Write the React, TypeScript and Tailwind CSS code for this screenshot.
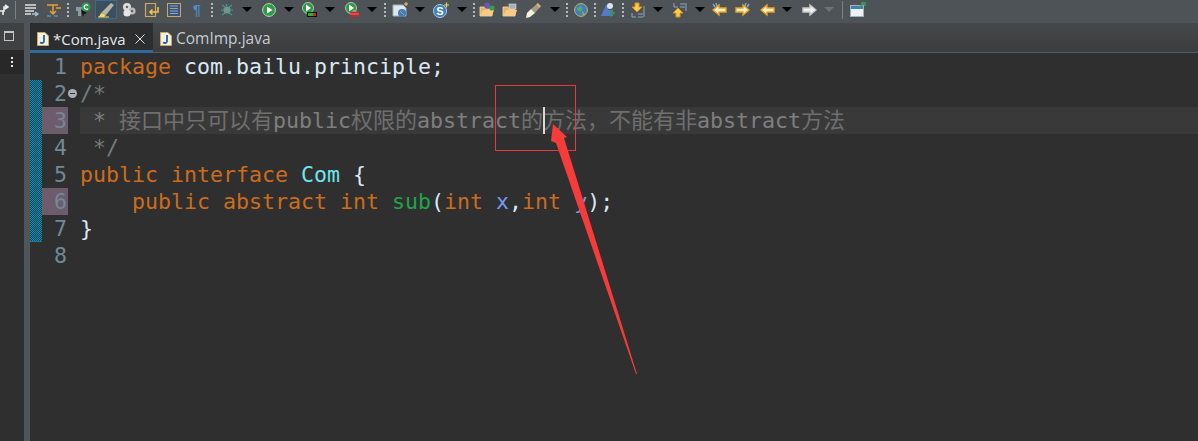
import React from "react";

const Caret = ({ c = "ml-[9px]", gray = false }: { c?: string; gray?: boolean }) => (
  <svg className={`${c} shrink-0`} width="10" height="5" viewBox="0 0 10 5">
    <path d="M0 0H10L5 5Z" fill={gray ? "#6d7275" : "#000"} />
  </svg>
);
const Dots = ({ c }: { c: string }) => (
  <div className={`${c} shrink-0 w-[2px] h-[14px] flex flex-col justify-between`}>
    {[0, 1, 2, 3].map((i) => (
      <div key={i} className="w-[2px] h-[2px] bg-[#b5b8b8]" />
    ))}
  </div>
);
const Ic = ({ c, w = 16, children }: { c: string; w?: number; children: React.ReactNode }) => (
  <svg className={`${c} shrink-0`} width={w} height="16" viewBox={`0 0 ${w} 16`}>
    {children}
  </svg>
);
const Run = ({ extra }: { extra?: React.ReactNode }) => (
  <>
    <circle cx="6" cy="6" r="5.5" fill="#2e9a46" stroke="#bfe0c0" strokeWidth="0.8" />
    <path d="M4 2.5L9 6L4 9.5Z" fill="#fff" />
    {extra}
  </>
);
const ArrowL = ({ flip = false, white = false, ears = false }: { flip?: boolean; white?: boolean; ears?: boolean }) => (
  <g transform={flip ? "translate(15 0) scale(-1 1)" : undefined}>
    {ears && <path d="M1 2l2 3M4 1l1 3" stroke="#7fa6c9" strokeWidth="1.5" />}
    <path
      d="M1 8L7 3V6H14V10H7V13Z"
      fill={white ? "#f0f0f0" : "#fff3cf"}
      stroke={white ? "#c9c9c9" : "#f0a020"}
      strokeWidth="1.4"
    />
  </g>
);

const Toolbar = () => (
  <div className="h-[23px] pb-[4px] bg-[#4d5356] flex items-center overflow-hidden">
    <Ic c="ml-0" w={9}>
      <path d="M0 9H4V5H7M5 3L8 5L5 7M3 9V13" stroke="#eee" strokeWidth="1.6" fill="none" />
    </Ic>
    <div className="ml-[6px] w-px h-[18px] bg-[#7c8184] shrink-0" />
    <Ic c="ml-[8px]">
      <path d="M1 3H12M1 6H12M1 9H10M1 12H7" stroke="#dfe0e0" strokeWidth="1.4" />
      <path d="M8 12H13M11 10L14 12L11 14" stroke="#a8c0d8" strokeWidth="1.4" fill="none" />
    </Ic>
    <Ic c="ml-[6px]">
      <path d="M1 3H12M7 3V11M4 9L7 12L10 9M10 6H15" stroke="#e8a030" strokeWidth="1.5" fill="none" />
      <path d="M1 14H5M8 14H12" stroke="#5b8cc0" strokeWidth="1.3" />
    </Ic>
    <Dots c="ml-[5px]" />
    <Ic c="ml-[6px]">
      <path d="M1 5H9V9H6V14H3V9H1Z" fill="#8a9aa8" />
      <path d="M6 7L12 11L9 12L8 15Z" fill="#111" />
      <circle cx="11" cy="5" r="4.5" fill="#2f9a55" />
      <path d="M13 3.5A2.2 2.2 0 1 0 13 6.5" stroke="#fff" strokeWidth="1.1" fill="none" />
    </Ic>
    <div className="ml-[4px] w-[22px] h-[19px] bg-[#3c4f5f] border border-[#3a6a92] flex items-center justify-center shrink-0">
      <svg width="18" height="16" viewBox="0 0 18 16">
        <path d="M4 11L14 1L17 3L9 13Z" fill="#b9b4a5" />
        <path d="M4 11L9 13L7 15H2Z" fill="#f4dc63" />
        <path d="M1 15H12" stroke="#f4dc63" strokeWidth="1" />
      </svg>
    </div>
    <Ic c="ml-[5px]" w={14}>
      <circle cx="5" cy="5" r="4" fill="#ddd" />
      <circle cx="10" cy="9" r="3.6" fill="#bbb" />
      <circle cx="5" cy="11" r="3.6" fill="#e5e5e5" />
      <circle cx="5" cy="5" r="1.3" fill="#666" />
      <circle cx="10" cy="9" r="1.2" fill="#666" />
    </Ic>
    <Ic c="ml-[8px]">
      <path d="M1.5 1.5H11.5V14.5H1.5Z" fill="#55585a" stroke="#d0a860" strokeWidth="1.2" />
      <path d="M14 5V10H6M8.5 7.5L6 10L8.5 12.5" stroke="#f2c34e" strokeWidth="1.6" fill="none" />
    </Ic>
    <Ic c="ml-[7px]" w={15}>
      <rect x="0.5" y="1.5" width="13" height="13" fill="#3f5672" stroke="#c8a868" />
      <path d="M3 4H11M3 6.5H11M3 9H11M3 11.5H11" stroke="#8aa6c8" />
    </Ic>
    <span className="ml-[11px] w-[10px] shrink-0 text-[14px] leading-[16px] font-bold text-[#4f8cc9] font-['Liberation_Sans',sans-serif]">¶</span>
    <Dots c="ml-[8px]" />
    <Ic c="ml-[7px]" w={14}>
      <circle cx="7" cy="8" r="3.6" fill="#6f9a8a" />
      <path d="M2 3L5 5M12 3L9 5M1 8H3M11 8H13M2 13L5 11M12 13L9 11M6 2L7 4" stroke="#3aa0a0" strokeWidth="1.2" />
    </Ic>
    <Caret c="ml-[8px]" />
    <Ic c="ml-[10px]" w={14}>
      <circle cx="7" cy="8" r="6.4" fill="#2e9a46" stroke="#b8d8b8" />
      <path d="M5 4.5L10.5 8L5 11.5Z" fill="#fff" />
    </Ic>
    <Caret c="ml-[8px]" />
    <Ic c="ml-[8px]">
      <Run extra={<><rect x="5" y="10" width="10" height="5" fill="#111" /><rect x="6" y="11" width="5" height="3" fill="#1bb83a" /><rect x="11" y="11" width="3" height="3" fill="#d22" /></>} />
    </Ic>
    <Caret c="ml-[7px]" />
    <Ic c="ml-[10px]">
      <Run extra={<><rect x="5" y="10" width="9" height="5" fill="#c62828" /><path d="M8 10V8.5H11V10M5 12H14" stroke="#e88" strokeWidth="0.8" fill="none" /></>} />
    </Ic>
    <Caret c="ml-[6px]" />
    <Dots c="ml-[7px]" />
    <Ic c="ml-[6px]">
      <path d="M1 3H11L14 6V14H1Z" fill="#dfe6ee" stroke="#9fb0c0" />
      <circle cx="10" cy="11" r="4" fill="#3d7fc0" />
      <path d="M8 9L12 13" stroke="#c8a030" />
      <path d="M12 2H16M14 0V4" stroke="#f4d060" strokeWidth="1" />
    </Ic>
    <Caret c="ml-[7px]" />
    <Ic c="ml-[8px]">
      <circle cx="7" cy="9" r="6.5" fill="#3b7fc0" stroke="#a8c8e8" />
      <text x="7" y="13" textAnchor="middle" fontSize="11" fontWeight="bold" fill="#fff" fontFamily="Liberation Sans">S</text>
      <path d="M11 3H16M13.5 0.5V5.5" stroke="#f4d060" strokeWidth="1.2" />
    </Ic>
    <Caret c="ml-[8px]" />
    <Dots c="ml-[6px]" />
    <Ic c="ml-[4px]">
      <path d="M1 5H6L7 7H13V14H1Z" fill="#e8b060" stroke="#fae0b0" strokeWidth="0.8" />
      <path d="M1 14L4 8H15L13 14Z" fill="#f4cc88" />
      <circle cx="8" cy="3.5" r="3" fill="#6a58b8" />
      <circle cx="13" cy="6" r="2.6" fill="#3f9a58" />
    </Ic>
    <Ic c="ml-[7px]">
      <path d="M1 5H6L7 7H13V14H1Z" fill="#e8b060" stroke="#fae0b0" strokeWidth="0.8" />
      <path d="M1 14L4 8H15L13 14Z" fill="#f4cc88" />
      <rect x="7" y="2" width="7" height="5" fill="#a8b0b8" stroke="#ddd" strokeWidth="0.6" />
    </Ic>
    <Ic c="ml-[7px]" w={17}>
      <path d="M6 7L13 1L16 4L10 11Z" fill="#a39a88" />
      <path d="M12 2L15 5" stroke="#e8b060" strokeWidth="2" />
      <path d="M1 16L2 11L6 7L10 11L5 15Z" fill="#fbf3d8" />
    </Ic>
    <Caret c="ml-[8px]" />
    <Dots c="ml-[6px]" />
    <Ic c="ml-[6px]" w={14}>
      <circle cx="7" cy="8" r="6.4" fill="#3d7fc0" stroke="#c8b070" />
      <path d="M3 6L7 4L9 7L6 10L4 9Z" fill="#58a868" />
      <path d="M8 9L11 12L9 14Z" fill="#c8a030" />
    </Ic>
    <Dots c="ml-[6px]" />
    <Ic c="ml-[5px]" w={15}>
      <path d="M0 14L5 3H9L7 8H12V14Z" fill="#5878c8" />
      <circle cx="9" cy="4" r="3" fill="#d8e4f0" />
      <path d="M10 9V15M10 9L14 11L10 13Z" fill="#2f9a55" stroke="#2f9a55" />
    </Ic>
    <Dots c="ml-[6px]" />
    <Ic c="ml-[6px]" w={15}>
      <path d="M2 5H5V1H9V5H12L7 10Z" fill="#f7cb4d" stroke="#e09018" />
      <path d="M2 11V15H6M8 12H13M8 15H13M14 4V15" stroke="#8fa8c0" strokeWidth="1" fill="none" />
    </Ic>
    <Caret c="ml-[8px]" />
    <Ic c="ml-[9px]" w={15}>
      <path d="M4 11H1L6 6L11 11H8V15H4Z" fill="#f7cb4d" stroke="#e09018" />
      <path d="M2 1V5H6M8 2H13M8 5H13M14 1V9" stroke="#8fa8c0" strokeWidth="1" fill="none" />
    </Ic>
    <Caret c="ml-[8px]" />
    <Ic c="ml-[7px]"><ArrowL ears /></Ic>
    <Ic c="ml-[7px]"><ArrowL ears flip /></Ic>
    <Ic c="ml-[9px]" w={15}><ArrowL /></Ic>
    <Caret c="ml-[7px]" />
    <Ic c="ml-[10px]" w={15}><ArrowL flip white /></Ic>
    <Caret c="ml-[7px]" gray />
    <div className="ml-[8px] w-px h-[18px] bg-[#7c8184] shrink-0" />
    <Ic c="ml-[7px]">
      <rect x="0.5" y="3.5" width="13" height="11" fill="#eef2f6" stroke="#9fb0c0" />
      <rect x="1" y="4" width="12" height="3" fill="#3f7fb8" />
      <path d="M9 6L14 1M11 1H15V4" stroke="#38a058" strokeWidth="1.6" fill="none" />
    </Ic>
  </div>
);

const JavaIcon = () => (
  <svg width="12" height="14" viewBox="0 0 12 14" className="shrink-0">
    <path d="M0.5 0.5H8L11.5 4V13.5H0.5Z" fill="#f4f0e0" stroke="#c8a868" />
    <path d="M7 3V9C7 11 5 11.5 3 10.5" stroke="#2a5fa0" strokeWidth="1.8" fill="none" />
  </svg>
);

const Band = () => (
  <svg width="12" height="162" className="absolute left-0 top-[27px]" shapeRendering="crispEdges">
    <defs>
      <pattern id="dith" width="2" height="2" patternUnits="userSpaceOnUse">
        <rect width="2" height="2" fill="#123f4e" />
        <rect width="1" height="1" fill="#0d8fb2" />
        <rect x="1" y="1" width="1" height="1" fill="#0d8fb2" />
      </pattern>
    </defs>
    <rect width="12" height="162" fill="url(#dith)" />
    <rect y="161" width="12" height="1" fill="#0d7f9e" />
  </svg>
);

const O = "text-[#cc6c1d]";
const W = "text-[#d9e8f7]";
const G = "text-[#717d7f]";
const C = "text-[#7f7f7f]";
const Z = ({ children }: { children: React.ReactNode }) => (
  <span className="text-[22px] text-[#6f6f6f]">{children}</span>
);

const lines: { n: number; mark?: boolean; cur?: boolean; code: React.ReactNode }[] = [
  { n: 1, code: <><span className={O}>package</span><span className={W}> com.bailu.principle;</span></> },
  { n: 2, code: <span className={G}>/*</span> },
  {
    n: 3,
    mark: true,
    cur: true,
    code: (
      <span className={C}>
        {" * "}
        <Z>接口中只可以有</Z>public<Z>权限的</Z>abstract<Z>的方法，不能有非</Z>abstract<Z>方法</Z>
      </span>
    ),
  },
  { n: 4, code: <span className={G}> */</span> },
  {
    n: 5,
    code: <><span className={O}>public interface</span><span className={W}> </span><span className="text-[#6fe3ee]">Com</span><span className={W}> {"{"}</span></>,
  },
  {
    n: 6,
    mark: true,
    code: (
      <>
        <span className={O}>{"    public abstract int"}</span>
        <span className={W}> </span>
        <span className="text-[#1ea64c]">sub</span>
        <span className={W}>(</span>
        <span className={O}>int</span>
        <span className="text-[#6e9cf0]"> x</span>
        <span className={W}>,</span>
        <span className={O}>int</span>
        <span className="text-[#6e9cf0]"> y</span>
        <span className={W}>);</span>
      </>
    ),
  },
  { n: 7, code: <span className={W}>{"}"}</span> },
  { n: 8, code: null },
];

export default function App() {
  return (
    <div className="relative w-[1198px] h-[441px] overflow-hidden bg-[#2f2f2f]">
      <Toolbar />
      <div className="flex h-[418px]">
        <div className="w-[24px] shrink-0 bg-[#3f4142] flex flex-col">
          <div className="h-[27px] pt-[8px] pl-[4px] shrink-0">
            <div className="w-[10px] h-[10px] border border-[#c4c4c4] border-t-2" />
          </div>
          <div className="h-[24px] bg-[#282828] flex flex-col items-center justify-center gap-[2px]">
            <div className="w-[2px] h-[2px] bg-[#e8e8e8]" />
            <div className="w-[2px] h-[2px] bg-[#e8e8e8]" />
            <div className="w-[2px] h-[2px] bg-[#e8e8e8]" />
          </div>
          <div className="flex-1 bg-[#2f2f2f]" />
        </div>
        <div className="w-[6px] shrink-0 bg-[#50555a]" />
        <div className="flex-1 min-w-0 flex flex-col">
          <div className="h-[30px] bg-linear-to-b from-[#45484a] to-[#3b3c3d] flex items-stretch shrink-0">
            <div className="w-[123px] bg-[#2b2d2f] border-b-[3px] border-[#2f6a9e] flex items-center pl-[7px] pt-[5px] font-['Open_Sans',sans-serif] text-[15px] text-[#e4e8ec]">
              <JavaIcon />
              <span className="ml-[4px]">*Com.java</span>
              <svg className="ml-[9px]" width="10" height="10" viewBox="0 0 10 10">
                <path d="M0.5 0.5L9.5 9.5M9.5 0.5L0.5 9.5" stroke="#e0e0e0" />
              </svg>
            </div>
            <div className="flex-1 border-b border-[#585c5e] flex items-center pl-[7px] pt-[3px] font-['Open_Sans',sans-serif] text-[15.5px] text-[#c4ccd4]">
              <JavaIcon />
              <span className="ml-[4px]">ComImp.java</span>
            </div>
          </div>
          <div className="relative font-['DejaVu_Sans_Mono','Noto_Sans_CJK_SC',monospace] text-[21.6px] leading-[27px] whitespace-pre">
            <Band />
            {lines.map((l) => (
              <div key={l.n} className="flex h-[27px]">
                <div className="w-[12px] shrink-0" />
                <div className={`w-[26px] shrink-0 text-right text-[#6f8a96] pr-[1px] ${l.mark ? "bg-[#6d5c6c]" : ""}`}>{l.n}</div>
                <div className="w-[12px] shrink-0 flex items-center justify-center">
                  {l.n === 2 && (
                    <div className="w-[9px] h-[9px] -ml-[3px] rounded-full bg-[#a9b2b8] flex items-center justify-center">
                      <div className="w-[5px] h-px bg-[#333]" />
                    </div>
                  )}
                </div>
                <div className={`flex-1 min-w-0 overflow-hidden ${l.cur ? "bg-[#393939]" : ""}`}>{l.code}</div>
              </div>
            ))}
          </div>
        </div>
      </div>
      <div className="absolute left-[543px] top-[107px] w-[2px] h-[27px] bg-[#d8d8d8]" />
      <div className="absolute left-[495px] top-[85px] w-[81px] h-[66px] border border-[#e23b3b]" />
      <svg className="absolute left-0 top-0" width="1198" height="441" viewBox="0 0 1198 441">
        <path d="M553 124L567 137L564 138L637 374H636L556 143L551 141Z" fill="#f73a3a" />
      </svg>
    </div>
  );
}
